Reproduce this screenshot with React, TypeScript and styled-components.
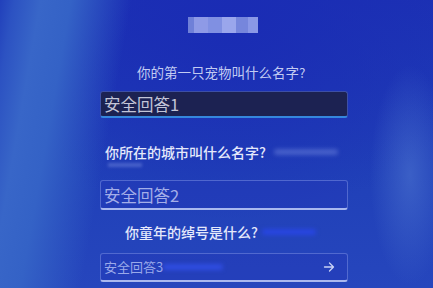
import React from "react";
import styled, { createGlobalStyle } from "styled-components";

const GlobalStyle = createGlobalStyle`
  html, body {
    margin: 0;
    padding: 0;
    width: 433px;
    height: 288px;
    overflow: hidden;
  }
  body {
    font-family: "Noto Sans CJK SC", "Noto Sans", "Liberation Sans", sans-serif;
  }
`;

const Screen = styled.div`
  width: 433px;
  height: 288px;
  box-sizing: border-box;
  padding: 17px 85px 0 100px;
  display: flex;
  flex-direction: column;
  background:
    radial-gradient(ellipse 40px 110px at 410px 175px, rgba(80, 120, 210, 0.55), transparent),
    linear-gradient(100deg, #2140bb 0px, #2c52c2 14px, #3866c8 40px, #3462c6 70px, rgba(40, 80, 200, 0) 130px),
    radial-gradient(ellipse 260px 200px at 230px 20px, #1a2cb4, transparent),
    linear-gradient(180deg, #1c31b4 0%, #2040b8 60%, #2646bd 100%);
`;

const TitleMosaic = styled.div`
  align-self: flex-start;
  margin-left: 88px;
  display: flex;
  height: 16px;
  filter: blur(0.6px);
`;

const Tile = styled.span<{ $shade: string; $w: number }>`
  display: block;
  width: ${(p) => p.$w}px;
  height: 16px;
  background: ${(p) => p.$shade};
`;

const Question = styled.div<{ $top: number; $indent: number; $size: number; $bright?: boolean }>`
  margin-top: ${(p) => p.$top}px;
  padding-left: ${(p) => p.$indent}px;
  display: flex;
  align-items: center;
  font-size: ${(p) => p.$size}px;
  line-height: 16px;
  font-weight: ${(p) => (p.$bright ? 500 : 400)};
  color: ${(p) => (p.$bright ? "#e4e8fb" : "#c2cbf2")};
  white-space: nowrap;
`;

const Smudge = styled.span<{ $w: number; $color: string; $dx?: number }>`
  display: inline-block;
  width: ${(p) => p.$w}px;
  height: 6px;
  margin-left: ${(p) => p.$dx ?? 6}px;
  border-radius: 3px;
  background: ${(p) => p.$color};
  filter: blur(2px);
`;

const SubSmudge = styled.span`
  display: block;
  margin: 3px 0 0 8px;
  width: 34px;
  height: 4px;
  background: rgba(150, 170, 240, 0.35);
  filter: blur(1.5px);
`;

const Field = styled.div<{ $top: number; $height: number; $variant: "active" | "idle" }>`
  margin-top: ${(p) => p.$top}px;
  height: ${(p) => p.$height}px;
  box-sizing: border-box;
  display: flex;
  align-items: center;
  padding: 0 12px 0 3px;
  border-radius: 3px;
  border: 1px solid ${(p) => (p.$variant === "active" ? "#3d4fa6" : "rgba(140, 160, 235, 0.45)")};
  border-bottom: 2px solid ${(p) => (p.$variant === "active" ? "#3587de" : "#a9b8ef")};
  background: ${(p) => (p.$variant === "active" ? "#1c2252" : "rgba(35, 55, 185, 0.45)")};
`;

const FieldText = styled.span<{ $size: number; $color: string }>`
  font-size: ${(p) => p.$size}px;
  line-height: 20px;
  color: ${(p) => p.$color};
  white-space: nowrap;
`;

const Arrow = styled.svg`
  margin-left: auto;
  width: 12px;
  height: 12px;
`;

export default function App() {
  return (
    <>
      <GlobalStyle />
      <Screen>
        <TitleMosaic>
          <Tile $shade="#6f80d8" $w={6} />
          <Tile $shade="#8e9ae6" $w={14} />
          <Tile $shade="#8090e2" $w={14} />
          <Tile $shade="#9aa6ec" $w={14} />
          <Tile $shade="#7686dc" $w={12} />
          <Tile $shade="#8a98e6" $w={10} />
        </TitleMosaic>

        <Question $top={31} $indent={37} $size={13.5}>
          你的第一只宠物叫什么名字?
        </Question>
        <Field $top={11} $height={27} $variant="active">
          <FieldText $size={16.5} $color="#c3c5d8">安全回答1</FieldText>
        </Field>

        <div>
          <Question $top={26} $indent={5} $size={14} $bright>
            你所在的城市叫什么名字?
            <Smudge $w={64} $color="rgba(150, 170, 240, 0.35)" $dx={8} />
          </Question>
          <SubSmudge />
        </div>
        <Field $top={13} $height={30} $variant="idle">
          <FieldText $size={16.5} $color="#a4aee8">安全回答2</FieldText>
        </Field>

        <Question $top={14} $indent={25} $size={14} $bright>
          你童年的绰号是什么?
          <Smudge $w={54} $color="rgba(40, 70, 230, 0.9)" $dx={4} />
        </Question>
        <Field $top={13} $height={29} $variant="idle">
          <FieldText $size={13} $color="#9aa9ea">安全回答3</FieldText>
          <Smudge $w={60} $color="rgba(50, 80, 235, 0.8)" $dx={0} />
          <Arrow viewBox="0 0 12 12" fill="none" stroke="#c9d2f6" strokeWidth="1.3" strokeLinecap="round" strokeLinejoin="round">
            <path d="M1.5 6h9M6.5 2l4 4-4 4" />
          </Arrow>
        </Field>
      </Screen>
    </>
  );
}
